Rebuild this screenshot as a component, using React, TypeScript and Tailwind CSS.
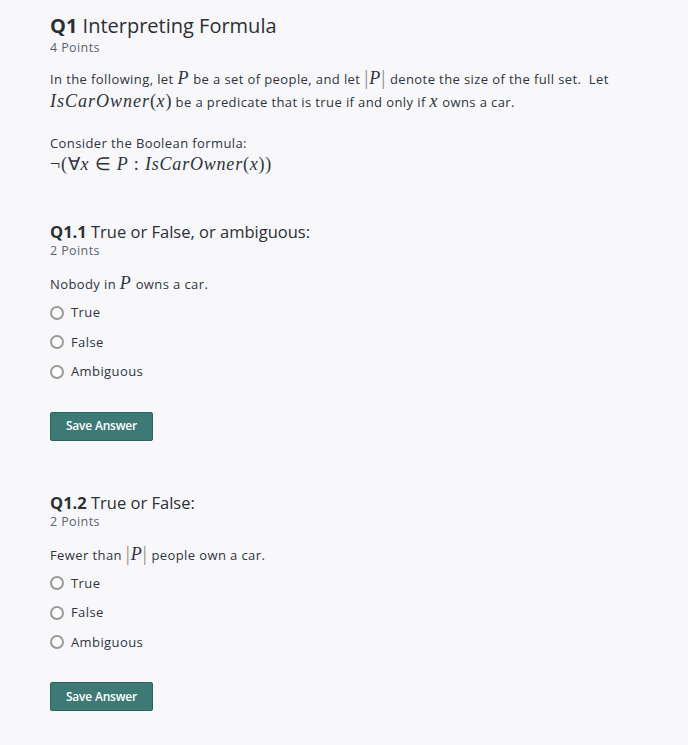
const sans = "font-['Open_Sans','Lato',sans-serif] tracking-[0.4px]";
const mathCls = "font-['Liberation_Serif','DejaVu_Serif',serif] italic text-[18px] tracking-[1px]";

function M({ children }: { children: React.ReactNode }) {
  return <span className={mathCls}>{children}</span>;
}

function Abs({ children }: { children: React.ReactNode }) {
  return (
    <span className="font-['Liberation_Serif',serif] text-[18px] tracking-[1px]">
      <span className="text-[20px] leading-none text-[#888]">|</span>
      <span className="italic">{children}</span>
      <span className="text-[20px] leading-none text-[#888]">|</span>
    </span>
  );
}

function Radio({ label }: { label: string }) {
  return (
    <label className="flex h-[29.5px] items-center gap-[7px]">
      <span className="box-border h-[14px] w-[14px] rounded-full border-2 border-[#9a9a9a] bg-white" />
      <span className="text-[13px] text-[#2e3440]">{label}</span>
    </label>
  );
}

interface SubQuestionProps {
  num: string;
  title: string;
  prompt: React.ReactNode;
}

function SubQuestion({ num, title, prompt }: SubQuestionProps) {
  return (
    <section className="flex flex-col">
      <h2 className="text-[16.5px] leading-[20px] tracking-normal text-[#2b2f36]">
        <span className="font-bold">{num}</span> {title}
      </h2>
      <div className="text-[12.5px] leading-[18px] text-[#5c6370]">2 Points</div>
      <p className="mt-[12px] text-[13px] leading-[22px] text-[#2e3440]">{prompt}</p>
      <div className="mt-[3px] flex flex-col">
        <Radio label="True" />
        <Radio label="False" />
        <Radio label="Ambiguous" />
      </div>
      <button className="mt-[25px] h-[29px] w-[103px] rounded-[2px] border border-[#2f625d] bg-[#3e7a75] text-[12px] font-semibold tracking-[-0.2px] text-white">
        Save Answer
      </button>
    </section>
  );
}

export default function App() {
  return (
    <div className={`min-h-[745px] bg-[#f8f8fa] px-[50px] pt-[13px] ${sans}`}>
      <h1 className="text-[20px] leading-[26px] tracking-normal text-[#2b2f36]">
        <span className="font-bold">Q1</span> Interpreting Formula
      </h1>
      <div className="text-[12.5px] leading-[18px] text-[#5c6370]">4 Points</div>

      <p className="mt-[10px] text-[13px] leading-[22px] text-[#2e3440]">
        In the following, let <M>P</M> be a set of people, and let <Abs>P</Abs> denote the size of
        the full set.&nbsp; Let <M>IsCarOwner</M>
        <span className="font-['Liberation_Serif',serif] text-[18px]">(</span>
        <M>x</M>
        <span className="font-['Liberation_Serif',serif] text-[18px]">)</span> be a predicate that
        is true if and only if <M>x</M> owns a car.
      </p>

      <p className="mt-[20px] text-[13px] leading-[20px] text-[#2e3440]">Consider the Boolean formula:</p>
      <p className="font-['Liberation_Serif',serif] text-[18px] leading-[22px] tracking-[0.8px] text-[#2e3440]">
        ¬(∀<i>x</i> ∈ <i>P</i> : <i>IsCarOwner</i>(<i>x</i>))
      </p>

      <div className="mt-[47px] flex flex-col gap-[52px]">
        <SubQuestion
          num="Q1.1"
          title="True or False, or ambiguous:"
          prompt={
            <>
              Nobody in <M>P</M> owns a car.
            </>
          }
        />
        <SubQuestion
          num="Q1.2"
          title="True or False:"
          prompt={
            <>
              Fewer than <Abs>P</Abs> people own a car.
            </>
          }
        />
      </div>
    </div>
  );
}
